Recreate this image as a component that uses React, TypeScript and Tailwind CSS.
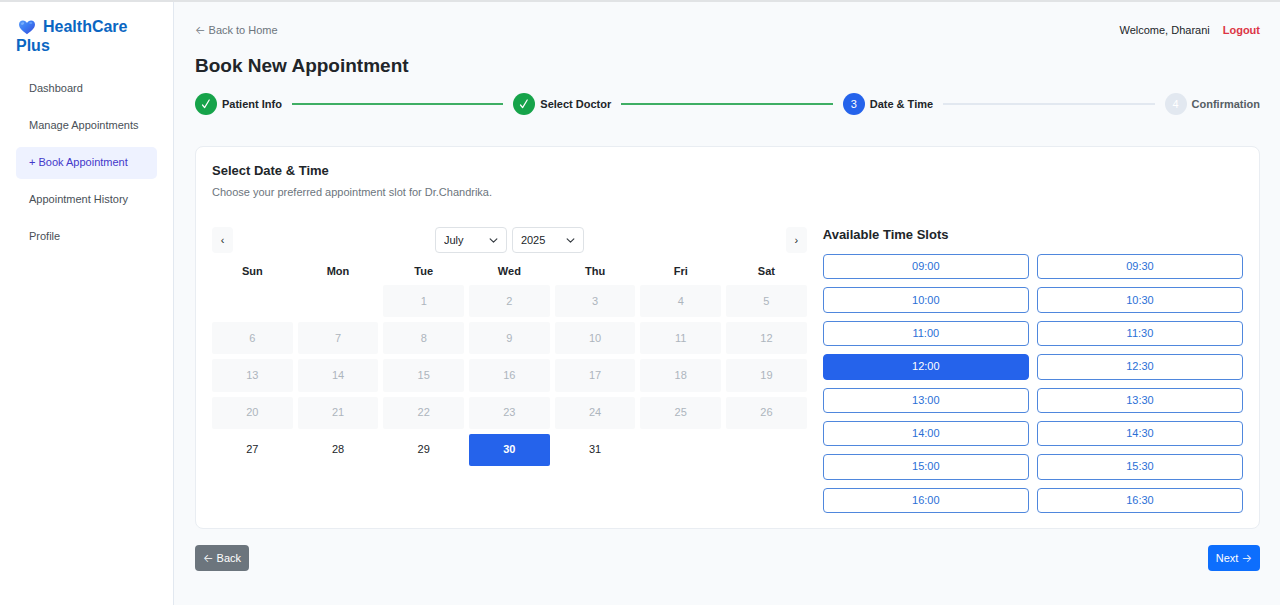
import { Fragment, useState } from "react";

const NAV = ["Dashboard", "Manage Appointments", "+ Book Appointment", "Appointment History", "Profile"];
const STEPS = ["Patient Info", "Select Doctor", "Date & Time", "Confirmation"];
const CURRENT_STEP = 2;
const WEEKDAYS = ["Sun", "Mon", "Tue", "Wed", "Thu", "Fri", "Sat"];
const LEADING_BLANKS = 2;
const FIRST_OPEN_DAY = 27;
const DAYS = Array.from({ length: 31 }, (_, i) => i + 1);
const SLOTS = Array.from({ length: 16 }, (_, i) => {
  const hour = String(9 + Math.floor(i / 2)).padStart(2, "0");
  return `${hour}:${i % 2 ? "30" : "00"}`;
});

function Heart() {
  return (
    <svg viewBox="0 0 18 16" className="mr-[7px] ml-[2px] inline-block h-4 w-[18px] align-[-3px]" aria-hidden="true">
      <defs>
        <linearGradient id="heart" x1="0" y1="0" x2="1" y2="1">
          <stop offset="0" stopColor="#5b9cf8" />
          <stop offset="0.45" stopColor="#3b7bf3" />
          <stop offset="1" stopColor="#3a49d6" />
        </linearGradient>
      </defs>
      <path
        d="M9 15.2C6 13 1 9.600 1 5.600C1 3 2.800 1.500 4.900 1.500C6.800 1.500 8.300 2.500 9 4C9.700 2.500 11.200 1.500 13.100 1.500C15.200 1.500 17 3 17 5.600C17 9.600 12 13 9 15.200Z"
        fill="url(#heart)"
      />
      <ellipse cx="4.600" cy="4.600" rx="1.700" ry="1.200" fill="#8fc0ff" opacity="0.7" transform="rotate(-35 4.6 4.6)" />
      <ellipse cx="12.800" cy="4" rx="1.600" ry="1" fill="#7db2ff" opacity="0.6" />
    </svg>
  );
}

function Check() {
  return (
    <svg viewBox="0 0 10 10" className="size-[10px]" fill="none" stroke="currentColor" aria-hidden="true">
      <path d="M1.500 6L3.600 8.600L8.200 1" strokeWidth="1.200" strokeLinecap="round" strokeLinejoin="round" />
    </svg>
  );
}

function Arrow({ children }: { children: string }) {
  return <span className="font-['Inter',sans-serif] font-light">{children}</span>;
}

function Picker({ label, options, initial }: { label: string; options: string[]; initial: string }) {
  return (
    <div className="relative">
      <select
        aria-label={label}
        defaultValue={initial}
        className="h-[26px] w-[72px] appearance-none rounded-[4px] border border-[#dee2e6] bg-white pb-px pl-2 text-[11px] text-[#212529]"
      >
        {options.map((o) => (
          <option key={o}>{o}</option>
        ))}
      </select>
      <svg
        viewBox="0 0 16 16"
        className="pointer-events-none absolute top-[9px] right-[9px] size-[9px]"
        fill="none"
        stroke="#343a40"
        strokeWidth="2"
        strokeLinecap="round"
        strokeLinejoin="round"
        aria-hidden="true"
      >
        <path d="m2 5 6 6 6-6" />
      </svg>
    </div>
  );
}

function Stepper() {
  return (
    <ol className="mt-[15px] flex items-center">
      {STEPS.map((step, i) => (
        <Fragment key={step}>
          {i > 0 && (
            <li
              aria-hidden="true"
              className={`mx-[10px] h-[2px] flex-1 ${i <= CURRENT_STEP ? "bg-[#3fae64]" : "bg-[#e2e8f0]"}`}
            />
          )}
          <li className="flex items-center gap-[5px] font-bold">
            <span
              className={`flex size-[22px] items-center justify-center rounded-full font-normal text-white ${
                i < CURRENT_STEP ? "bg-[#16a34a]" : i === CURRENT_STEP ? "bg-[#2563eb]" : "bg-[#e2e8f0]"
              }`}
            >
              {i < CURRENT_STEP ? <Check /> : i + 1}
            </span>
            <span className={i > CURRENT_STEP ? "text-[#565e64]" : ""}>{step}</span>
          </li>
        </Fragment>
      ))}
    </ol>
  );
}

function Calendar() {
  const [selected, setSelected] = useState(30);
  return (
    <div className="col-span-7">
      <div className="flex items-center justify-between">
        <button aria-label="Previous month" className="h-[26px] w-[21px] rounded-[4px] bg-[#f8f9fa] pb-px">‹</button>
        <div className="flex gap-[5px]">
          <Picker label="Month" options={["June", "July", "August"]} initial="July" />
          <Picker label="Year" options={["2024", "2025", "2026"]} initial="2025" />
        </div>
        <button aria-label="Next month" className="h-[26px] w-[21px] rounded-[4px] bg-[#f8f9fa] pb-px">›</button>
      </div>
      <div className="mt-[10px] grid grid-cols-7 gap-x-[5px] text-center font-bold">
        {WEEKDAYS.map((d) => (
          <div key={d}>{d}</div>
        ))}
      </div>
      <div className="mt-[6px] grid min-h-[181px] auto-rows-fr grid-cols-7 gap-[5px]">
        {Array.from({ length: LEADING_BLANKS }, (_, i) => (
          <div key={`blank-${i}`} />
        ))}
        {DAYS.map((day) => (
          <button
            key={day}
            disabled={day < FIRST_OPEN_DAY}
            onClick={() => setSelected(day)}
            className={`rounded-[2px] pb-px ${
              day < FIRST_OPEN_DAY
                ? "bg-[#f8f9fa] text-[#adb5bd]"
                : day === selected
                  ? "bg-[#2563eb] font-bold text-white"
                  : "bg-white"
            }`}
          >
            {day}
          </button>
        ))}
      </div>
    </div>
  );
}

function TimeSlots() {
  const [selected, setSelected] = useState("12:00");
  return (
    <div className="col-span-5">
      <h3 className="text-[13px] leading-4 font-bold">Available Time Slots</h3>
      <div className="mt-[11px] grid min-h-[259px] auto-rows-fr grid-cols-2 gap-2">
        {SLOTS.map((slot) => (
          <button
            key={slot}
            onClick={() => setSelected(slot)}
            className={`rounded-[4px] border pb-px ${
              slot === selected ? "border-[#2563eb] bg-[#2563eb] text-white" : "border-[#4f87dd] bg-white text-[#2b6fd6]"
            }`}
          >
            {slot}
          </button>
        ))}
      </div>
    </div>
  );
}

export default function App() {
  return (
    <div className="flex min-h-screen border-t-2 border-[#e1e3e5] bg-[#f8fafc] font-['Liberation_Sans',Arial,sans-serif] text-[11px] leading-4 text-[#212529]">
      <aside className="w-[174px] shrink-0 border-r border-[#e2e8f0] bg-white px-4 pt-[15px]">
        <h1 className="text-[16px] leading-[19px] font-bold text-[#0a66c2]">
          <Heart />
          HealthCare Plus
        </h1>
        <nav className="mt-[18px] flex flex-col gap-[5px]">
          {NAV.map((item, i) => (
            <a
              key={item}
              href="#"
              className={`flex h-8 items-center rounded-[5px] px-[13px] pb-[2px] whitespace-nowrap ${
                i === 2 ? "bg-[#eef2ff] text-[#4338ca]" : "text-[#495057]"
              }`}
            >
              {item}
            </a>
          ))}
        </nav>
      </aside>
      <main className="min-w-0 flex-1 pt-5 pr-5 pb-8 pl-[21px]">
        <header className="flex justify-between">
          <a href="#" className="text-[#6c757d]"><Arrow>←</Arrow> Back to Home</a>
          <div className="flex gap-[13px]">
            <span>Welcome, Dharani</span>
            <a href="#" className="font-bold text-[#dc3545]">Logout</a>
          </div>
        </header>
        <h2 className="mt-4 text-[19px] leading-6 font-bold">Book New Appointment</h2>
        <Stepper />
        <section className="mt-[31px] rounded-[8px] border border-[#e9edf2] bg-white px-4 pt-4 pb-[15px]">
          <h3 className="text-[13px] leading-4 font-bold">Select Date &amp; Time</h3>
          <p className="mt-[5px] text-[#6c757d]">Choose your preferred appointment slot for Dr.Chandrika.</p>
          <div className="mt-[27px] grid grid-cols-12 gap-x-4">
            <Calendar />
            <TimeSlots />
          </div>
        </section>
        <footer className="mt-4 flex justify-between">
          <button className="h-[26px] rounded-[4px] bg-[#6c757d] px-2 pb-px text-white"><Arrow>←</Arrow> Back</button>
          <button className="h-[26px] rounded-[4px] bg-[#0d6efd] px-2 pb-px text-white">Next <Arrow>→</Arrow></button>
        </footer>
      </main>
    </div>
  );
}
